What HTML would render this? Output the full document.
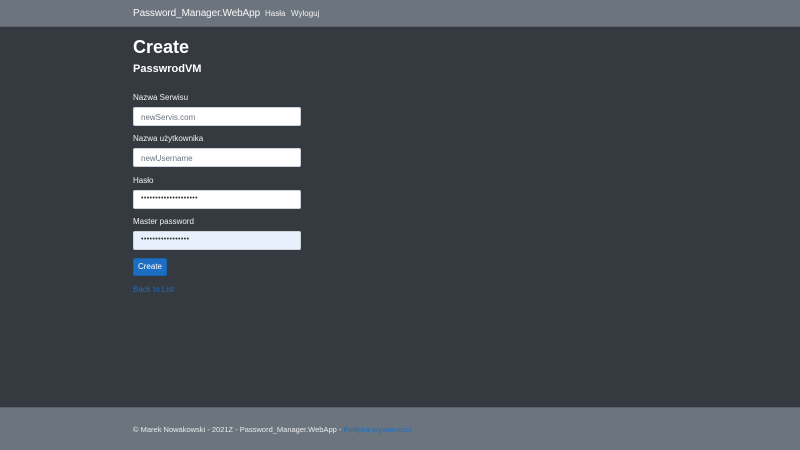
<!DOCTYPE html>
<html><head><meta charset="utf-8"><style>
*{margin:0;padding:0;box-sizing:border-box}
body{width:800px;height:450px;background:#343a40;font-family:"Liberation Sans",sans-serif;color:#fff;position:relative;overflow:hidden}
.nav{position:absolute;top:0;left:0;width:800px;height:27px;background:#6c757d;border-bottom:1px solid #5d646b}
.abs{position:absolute;white-space:nowrap}
.in{position:absolute;left:133px;width:168px;height:19px;background:#fff;border:1px solid #ced4da;border-radius:2px;font-size:8px;color:#6c757d;padding:5px 0 0 7px}
.lbl{position:absolute;left:133px;font-size:8px;color:#f0f0f0}
.dots{color:#333;font-size:7px;letter-spacing:0.4px;padding-top:4px}
.foot{position:absolute;top:407px;left:0;width:800px;height:43px;background:#6c757d;border-top:1px solid #5a6168}
</style></head><body>
<div class="nav"></div>
<div class="abs" style="left:133px;top:8px;font-size:10px;letter-spacing:-0.1px;color:#f8f9fa">Password_Manager.WebApp</div>
<div class="abs" style="left:265px;top:9px;font-size:8px;color:#f0f0f0">Hasła</div>
<div class="abs" style="left:291px;top:9px;font-size:8px;color:#f0f0f0">Wyloguj</div>
<div class="abs" style="left:133px;top:37px;font-size:18px;font-weight:bold">Create</div>
<div class="abs" style="left:133px;top:63px;font-size:11px;font-weight:bold">PasswrodVM</div>
<div class="lbl" style="top:93px">Nazwa Serwisu</div>
<div class="in" style="top:107px">newServis.com</div>
<div class="lbl" style="top:134px">Nazwa użytkownika</div>
<div class="in" style="top:148px">newUsername</div>
<div class="lbl" style="top:176px">Hasło</div>
<div class="in dots" style="top:190px">••••••••••••••••••••</div>
<div class="lbl" style="top:217px">Master password</div>
<div class="in dots" style="top:231px;background:#e8f0fe">•••••••••••••••••</div>
<div class="abs" style="left:133px;top:258px;width:34px;height:18px;background:#1b6ec2;border:1px solid #1861ac;border-radius:2px;font-size:8px;text-align:center;line-height:16px">Create</div>
<div class="abs" style="left:133px;top:285px;font-size:8px;color:#1b6ec2">Back to List</div>
<div class="foot"></div>
<div class="abs" style="left:133px;top:425px;font-size:7.5px;color:#e9ecef">© Marek Nowakowski - 2021Z - Password_Manager.WebApp - <span style="color:#1b6ec2">Polityka prywatności</span></div>
</body></html>
